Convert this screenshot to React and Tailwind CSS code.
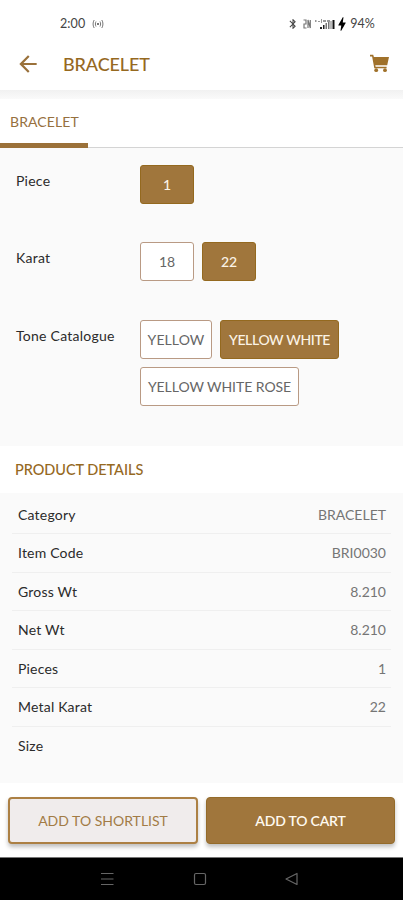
import React, { useState } from "react";
import { MdArrowBack, MdBluetooth, MdBolt } from "react-icons/md";

const options = [
  { label: "Piece", height: "h-[77px]", items: [{ name: "1", size: "w-[54px]", text: "" }], selected: "1" },
  {
    label: "Karat",
    height: "h-[78px]",
    items: [
      { name: "18", size: "w-[54px]", text: "" },
      { name: "22", size: "w-[54px]", text: "" },
    ],
    selected: "22",
  },
  {
    label: "Tone Catalogue",
    height: "h-[126px]",
    items: [
      { name: "YELLOW", size: "w-[72px]", text: "tracking-[0.1px]" },
      { name: "YELLOW WHITE", size: "w-[119px]", text: "tracking-[-0.35px]" },
      { name: "YELLOW WHITE ROSE", size: "w-[159px]", text: "tracking-[-0.05px]" },
    ],
    selected: "YELLOW WHITE",
  },
];

const details = [
  { label: "Category", value: "BRACELET" },
  { label: "Item Code", value: "BRI0030" },
  { label: "Gross Wt", value: "8.210" },
  { label: "Net Wt", value: "8.210" },
  { label: "Pieces", value: "1" },
  { label: "Metal Karat", value: "22" },
  { label: "Size", value: "" },
];

const StatusBar = () => (
  <div className="h-[44px] shrink-0 pt-[15px] pl-[60px] pr-[28px] flex items-start justify-between text-[12.5px] leading-[18px] text-[#444]">
    <div className="h-[18px] flex items-center gap-[7px]">
      <span className="tracking-[0.1px]">2:00</span>
      <svg width="12" height="10" viewBox="0 0 12 10" fill="none" stroke="#777" strokeWidth="1">
        <path d="M2.2 1C.7 3 .7 7 2.2 9M9.8 1c1.500 2 1.500 6 0 8M4 2.500C3.200 4 3.200 6 4 7.500M8 2.500c.8 1.500.8 3.500 0 5M5 4l2 2M7 4L5 6" />
      </svg>
    </div>
    <div className="h-[18px] flex items-center">
      <MdBluetooth size={12} className="text-[#444]" />
      <svg className="ml-[4px]" width="8" height="10" viewBox="0 0 8 10" fill="none" stroke="#777" strokeWidth="1.200">
        <path d="M.5 1h2.500v4H1v4h2.500M5 9V1l2.300 8V1" />
      </svg>
      <svg className="ml-[4px]" width="20" height="11" viewBox="0 0 20 11">
        <path d="M0 1h1.500v2H0zM3 2h2v1H3zM6 0h1v4H6zM8 1h3v2H8zM12 1h3v2h-3z" fill="#999" />
        <path d="M5 8h2v2H5zM8 6h1.500v4H8z" fill="#222" />
        <path d="M10.500 4H12v6h-1.500zM13 3h1.500v7H13zM15.500 2h1v8h-1z" fill="#777" />
        <path d="M17.500 1h2v9h-2z" fill="#111" />
      </svg>
      <MdBolt size={18} className="-ml-[2px] -mr-[2px] text-black" />
      <span className="ml-px tracking-[0.1px]">94%</span>
    </div>
  </div>
);

const CartIcon = () => (
  <svg width="20" height="19" viewBox="0 0 20 19" fill="#a0712a">
    <path d="M0 .8h3.200l.7 2.200H19l-1.800 8.200H5.300l.3 1.600h11v1.400H4.300L2.100 2.400H0z" />
    <circle cx="6.200" cy="16.200" r="1.900" />
    <circle cx="15" cy="16.200" r="1.900" />
  </svg>
);

const Header = () => (
  <div className="h-[46px] shrink-0 pl-[15px] pr-[13px] flex items-center pb-[7px]">
    <MdArrowBack size={26} className="text-[#9a713a]" />
    <h1 className="ml-[22px] flex-1 text-[18px] leading-6 text-[#96691f] font-medium tracking-[-0.1px]">BRACELET</h1>
    <CartIcon />
  </div>
);

const App = () => {
  const [picked, setPicked] = useState(options.map((o) => o.selected));

  const pick = (index, name) => {
    setPicked(picked.map((p, i) => (i === index ? name : p)));
  };

  return (
    <div className="w-full h-[900px] flex flex-col overflow-hidden bg-white font-['Lato',sans-serif] text-[14px]">
      <StatusBar />
      <Header />
      <div className="h-[9px] shrink-0 bg-gradient-to-b from-[#f1f1f1] to-[#fafafa]" />

      {/* TABS */}
      <div className="h-[49px] shrink-0 flex border-b border-[#d4d4d4]">
        <div className="w-[88px] h-[49px] border-b-[5px] border-[#9b7139] pl-[10px] pt-[13px] leading-5 tracking-[0.1px] text-[#96703e]">
          BRACELET
        </div>
      </div>

      {/* OPTIONS */}
      <div className="h-[298px] shrink-0 bg-[#fafafa] pt-[17px] pl-4">
        {options.map((option, index) => (
          <div key={option.label} className={`flex ${option.height}`}>
            <span className="w-[124px] shrink-0 pt-[6px] leading-5 tracking-[0.25px] text-[#2b2b2b]">{option.label}</span>
            <div className="flex flex-wrap content-start gap-x-2 gap-y-2">
              {option.items.map((item) => (
                <button
                  key={item.name}
                  onClick={() => pick(index, item.name)}
                  className={`h-[39px] rounded-[3px] border whitespace-nowrap ${item.size} ${item.text} ${
                    picked[index] === item.name
                      ? "bg-[#a0763c] border-[#94691f] text-[#fbf3e6] font-medium"
                      : "bg-white border-[#b99a84] text-[#666]"
                  }`}
                >
                  {item.name}
                </button>
              ))}
            </div>
          </div>
        ))}
      </div>

      {/* PRODUCT DETAILS */}
      <h2 className="h-[47px] shrink-0 pl-[15px] pt-px flex items-center text-[14.5px] text-[#96691f] font-medium tracking-[-0.05px]">
        PRODUCT DETAILS
      </h2>
      <div className="h-[290px] shrink-0 bg-[#fafafa] px-3 pt-[2.500px]">
        {details.map((row) => (
          <div
            key={row.label}
            className="h-[38.500px] pl-[6px] pr-[5px] flex items-center justify-between border-b border-[#efefef] last:border-0"
          >
            <span className="tracking-[0.2px] text-[#2b2b2b]">{row.label}</span>
            <span className="text-[#757575]">{row.value}</span>
          </div>
        ))}
      </div>

      {/* ACTIONS */}
      <div className="h-[74px] shrink-0 px-2 pt-[14px] flex gap-2">
        <button className="h-[47px] w-[190px] rounded-[4px] border-2 border-[#ac8044] bg-[#f0ecec] text-[#a27b45] shadow-[0_3px_4px_rgba(0,0,0,0.25)]">
          ADD TO SHORTLIST
        </button>
        <button className="h-[47px] flex-1 rounded-[4px] border border-[#946b2a] bg-[#a0763c] text-[#fffaf0] font-semibold tracking-[-0.2px] shadow-[0_3px_4px_rgba(0,0,0,0.25)]">
          ADD TO CART
        </button>
      </div>

      {/* ANDROID NAV */}
      <div className="h-[43px] shrink-0 bg-black border-t border-[#777]">
        <svg width="403" height="42" viewBox="0 0 403 42" fill="none" stroke="#666" strokeWidth="1.200">
          <path d="M101 15.500h12.500M101 21h12.500M101 26.500h12.500" />
          <rect x="194.500" y="15.500" width="11" height="11" rx="1.500" />
          <path d="M286 21l11-5.500v11z" strokeLinejoin="round" />
        </svg>
      </div>
    </div>
  );
};

export default App;
